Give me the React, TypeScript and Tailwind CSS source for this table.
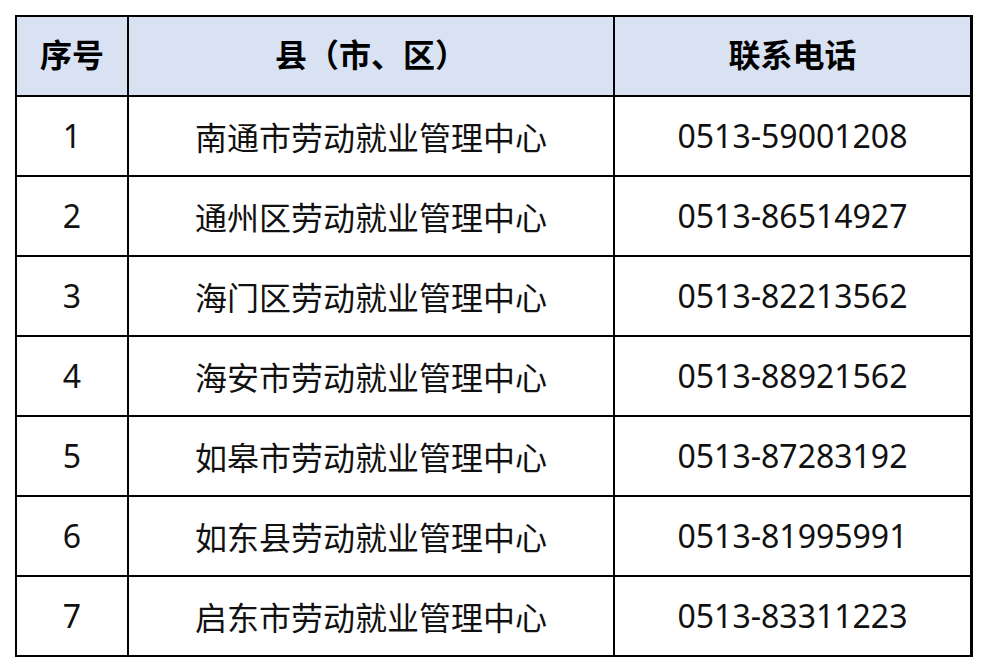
import React from "react";

const rows = [
  ["1", "南通市劳动就业管理中心", "0513-59001208"],
  ["2", "通州区劳动就业管理中心", "0513-86514927"],
  ["3", "海门区劳动就业管理中心", "0513-82213562"],
  ["4", "海安市劳动就业管理中心", "0513-88921562"],
  ["5", "如皋市劳动就业管理中心", "0513-87283192"],
  ["6", "如东县劳动就业管理中心", "0513-81995991"],
  ["7", "启东市劳动就业管理中心", "0513-83311223"],
];

function Head({ children }: { children: React.ReactNode }) {
  return (
    <div className="flex items-center justify-center bg-[#d9e2f3] pb-[6px] font-['Noto_Sans_CJK_SC',sans-serif] text-[32px] font-bold text-black">
      {children}
    </div>
  );
}

export default function App() {
  return (
    <div className="h-[672px] w-[988px] bg-white pl-[15px] pt-[15px]">
      <div className="grid w-[958px] auto-rows-[78px] grid-cols-[110px_484px_355px] gap-[2px] border-2 border-black bg-black text-[#111]">
        <Head>序号</Head>
        <Head>县（市、区）</Head>
        <Head>联系电话</Head>
        {rows.map((r) => (
          <React.Fragment key={r[0]}>
            <div className="flex items-center justify-center bg-white font-['Noto_Sans','Noto_Sans_CJK_SC',sans-serif] text-[32px]">
              {r[0]}
            </div>
            <div className="flex items-center justify-center bg-white font-['Noto_Sans_CJK_SC',sans-serif] text-[32px]">
              {r[1]}
            </div>
            <div className="flex items-center justify-center bg-white font-['Noto_Sans','Noto_Sans_CJK_SC',sans-serif] text-[32px]">
              {r[2]}
            </div>
          </React.Fragment>
        ))}
      </div>
    </div>
  );
}
